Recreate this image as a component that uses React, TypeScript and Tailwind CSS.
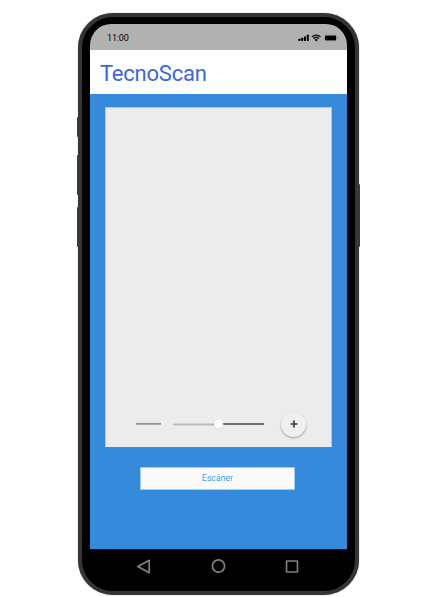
import React from "react";

function SideButtons() {
  return (
    <>
      <i className="absolute -left-[5.5px] top-[100px] h-[20px] w-[3px] rounded-l-[1px] bg-[#3a3a3e]" />
      <i className="absolute -left-[5.5px] top-[138px] h-[40px] w-[3px] rounded-l-[1px] bg-[#3a3a3e]" />
      <i className="absolute -left-[5.5px] top-[190px] h-[40px] w-[3px] rounded-l-[1px] bg-[#3a3a3e]" />
      <i className="absolute -right-[5px] top-[167px] h-[63px] w-[3px] rounded-r-[1px] bg-[#3a383e]" />
    </>
  );
}

function StatusBar() {
  return (
    <div className="flex h-[26px] items-center justify-between bg-[#b1b1b1] pl-[17px] pr-[8px] text-[9px] leading-none text-black">
      <span className="pt-[2px] tracking-[-0.15px]">11:00</span>
      <svg className="mt-[2px]" width="41" height="8" viewBox="0 0 41 8">
        <g fill="#000">
          <rect x="0.4" y="4.8" width="2" height="2.2" rx="0.4" />
          <rect x="3.2" y="3.8" width="2" height="3.2" rx="0.4" />
          <rect x="6" y="2.4" width="2" height="4.6" rx="0.4" />
          <rect x="8.8" y="0.8" width="2" height="6.2" rx="0.4" />
          <path d="M18.2 7.4l-1.6-1.7a2.3 2.3 0 0 1 3.2 0z" />
          <rect x="27.1" y="1.4" width="11" height="5.1" rx="1" />
        </g>
        <g fill="none" stroke="#000" strokeWidth="1.3">
          <path d="M13.9 2.9a6.2 6.2 0 0 1 8.6 0" />
          <path d="M15.4 4.6a4 4 0 0 1 5.6 0" />
        </g>
        <rect x="26.4" y="0.9" width="12.4" height="6.1" rx="1.6" fill="none" stroke="#8b8b8b" strokeWidth="0.5" />
        <path d="M39.5 3v2.2q1-.3 1-1.1t-1-1.1" fill="#8b8b8b" />
      </svg>
    </div>
  );
}

function ZoomControl() {
  return (
    <div className="flex h-[28px] items-center">
      <div className="ml-[30px] h-[2px] w-[25px] border-t border-[#8f8f8f] bg-[#a9a9a9]" />
      <svg className="ml-[12px]" width="91" height="12" viewBox="0 0 91 12">
        <rect x="0" y="5.4" width="47" height="2" rx="1" fill="#b9b9b9" />
        <rect x="46" y="5" width="45" height="2" rx="0.5" fill="#6d6d6d" />
        <circle cx="45.6" cy="6.2" r="4.7" fill="#e0e0e0" />
        <circle cx="45.6" cy="6" r="4.4" fill="#fff" />
      </svg>
      <div className="ml-[17px] flex size-[25px] items-center justify-center rounded-full bg-[#f0f0f0] shadow-[0_1px_2px_rgba(0,0,0,0.35)]">
        <svg width="8" height="8" viewBox="0 0 8 8">
          <path d="M4 .5v7M.5 4h7" stroke="#3c3c3c" strokeWidth="1.7" />
        </svg>
      </div>
    </div>
  );
}

function NavBar() {
  return (
    <div className="flex h-[34px] items-center justify-between rounded-b-[24px] border-t border-[#081a2b] bg-black pl-[46px] pr-[48px]">
      <svg width="15" height="16" viewBox="0 0 15 16">
        <path d="M13.2 1.3v12.4L1.8 7.5z" fill="none" stroke="#808080" strokeWidth="1.7" strokeLinejoin="round" />
      </svg>
      <svg width="15" height="15" viewBox="0 0 15 15">
        <circle cx="7.5" cy="7" r="6.1" fill="none" stroke="#808080" strokeWidth="1.7" />
      </svg>
      <svg width="14" height="14" viewBox="0 0 14 14">
        <rect x="1.5" y="1" width="11" height="11" rx="0.6" fill="none" stroke="#808080" strokeWidth="1.7" />
      </svg>
    </div>
  );
}

export default function App() {
  return (
    <main className="h-[597px] w-[432px] overflow-hidden bg-white pl-[78px] pt-[12.5px] font-[Roboto,sans-serif]">
      <div className="relative h-[582px] w-[281px] rounded-[35px] border-4 border-[#353539] bg-black px-[8px] pt-[7.5px] shadow-[0_0_1px_rgba(0,0,0,0.6)]">
        <SideButtons />
        <div className="w-[257px] overflow-hidden rounded-t-[21px]">
          <StatusBar />
          <header className="flex h-[44px] items-center bg-white pl-[10px] text-[22px] leading-none tracking-[-0.22px] text-[#3c66dc]">
            <h1 className="pt-[3px]">TecnoScan</h1>
          </header>
          <section className="h-[455px] bg-[#358adb] pl-[15px] pt-[13px]">
            <div className="flex h-[340px] w-[227px] flex-col justify-end border border-[#a6caeb] border-b-transparent bg-[#ececec] pb-[8px]">
              <ZoomControl />
            </div>
            <button className="ml-[35px] mt-[20px] flex h-[23px] w-[155px] items-center justify-center rounded-[1px] border border-[#a2cbee] bg-[#fafafa] text-[8.5px] leading-none tracking-[0.1px] text-[#3f9bea]">
              Escáner
            </button>
          </section>
          <NavBar />
        </div>
      </div>
    </main>
  );
}
